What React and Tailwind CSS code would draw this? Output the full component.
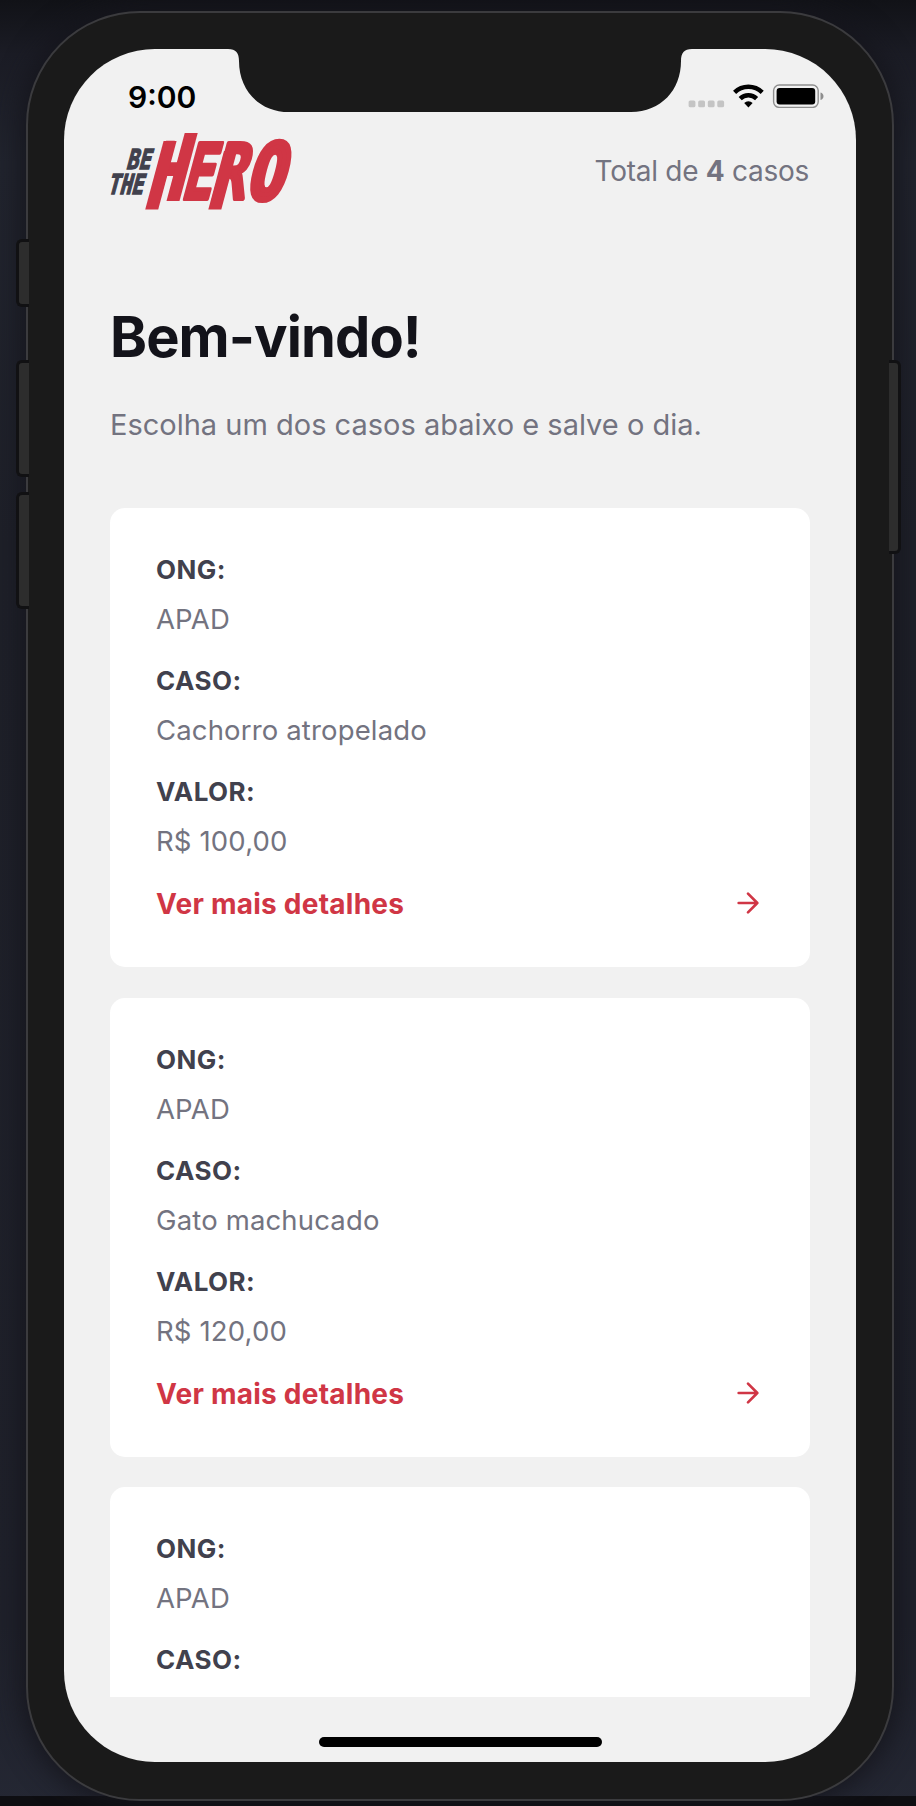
import React from "react";

const cases = [
  [["ONG:", "APAD"], ["CASO:", "Cachorro atropelado"], ["VALOR:", "R$ 100,00"]],
  [["ONG:", "APAD"], ["CASO:", "Gato machucado"], ["VALOR:", "R$ 120,00"]],
  [["ONG:", "APAD"], ["CASO:", null]],
];

function Logo() {
  return (
    <svg className="mt-[5px] h-[78px] w-[184px] overflow-visible" viewBox="109 133 184 78">
      <g transform="translate(0 201) skewX(-15)">
        <g className="fill-[#d03645] stroke-[#d03645] font-['DejaVu_Sans_Mono'] font-bold" fontSize="77" strokeWidth="4" strokeLinejoin="round">
          <text transform="translate(145.4 -2) scale(.737 1)">H</text>
          <text transform="translate(178.4 -2) scale(.67 1)">E</text>
          <text transform="translate(207.9 -2) scale(.73 1)">R</text>
          <text strokeWidth="6" transform="translate(243.4 -2) scale(.79 1)">O</text>
        </g>
        <g className="fill-[#d03645]">
          <rect x="146.5" y="-60" width="13" height="68.5" />
          <rect x="165.5" y="-68" width="13" height="68" />
          <rect x="209.6" y="-50" width="13" height="58.5" />
        </g>
      </g>
      <g className="fill-[#41414d] stroke-[#41414d] font-['DejaVu_Sans_Mono'] font-bold" strokeWidth="1.4" fontSize="27.5">
        <text transform="translate(124.8 168.6) skewX(-15) scale(.73 1)">BE</text>
        <text transform="translate(106 194.2) skewX(-15) scale(.72 1)">THE</text>
      </g>
    </svg>
  );
}

function StatusIcons() {
  return (
    <svg className="h-6 w-[137px]" viewBox="688 84 137 24">
      <g className="fill-[#c4c4c4]">
        <rect x="688.6" y="100.5" width="6.8" height="6.8" rx="1.6" />
        <rect x="698.2" y="100.5" width="6.8" height="6.8" rx="1.6" />
        <rect x="707.8" y="100.5" width="6.8" height="6.8" rx="1.6" />
        <rect x="717.3" y="100.5" width="6.8" height="6.8" rx="1.6" />
      </g>
      <g className="fill-none stroke-black" strokeWidth="4.4">
        <path d="M734.6 92.4a19.6 19.6 0 0 1 27.6 0" />
        <path d="M740.2 98.6a11.6 11.6 0 0 1 16.4 0" />
      </g>
      <path className="fill-black" d="M744.2 103a6.2 6.2 0 0 1 8.4 0l-4.2 4.4z" />
      <rect x="773.6" y="85" width="44.6" height="22.4" rx="5.6" className="fill-none stroke-[#8e8e8e]" strokeWidth="1.4" />
      <rect x="776.6" y="88" width="38.6" height="16.6" rx="3" className="fill-black" />
      <path className="fill-[#8e8e8e]" d="M820.5 92.5c4 1.2 4 6.4 0 7.6z" />
    </svg>
  );
}

function Case({ fields }) {
  return (
    <article className="flex h-[459px] shrink-0 flex-col rounded-[15px] bg-white px-[46px] pt-[44px] text-[27.5px] text-[#737380]">
      <dl>
        {fields.map(([label, value]) => (
          <React.Fragment key={label}>
            <dt className="h-[49px] text-[26px] leading-[36px] font-bold tracking-[0.45px] text-[#41414d]">{label}</dt>
            {value && <dd className="h-[62px] leading-[36px] tracking-[0.15px]">{value}</dd>}
          </React.Fragment>
        ))}
      </dl>
      {fields.length === 3 && (
        <div className="mt-px flex items-center justify-between text-[28px] leading-[36px] font-bold tracking-[0.25px] text-[#d03645]">
          <span>Ver mais detalhes</span>
          <svg className="-mt-0.5 h-8 w-8 fill-none stroke-current" viewBox="0 0 24 24" strokeWidth="2" strokeLinecap="round" strokeLinejoin="round">
            <path d="M5 12h14M12 5l7 7-7 7" />
          </svg>
        </div>
      )}
    </article>
  );
}

export default function App() {
  return (
    <div className="relative h-[1806px] w-[916px] overflow-hidden bg-[linear-gradient(#111217,#1b1c25_3%,#21242e_9%,#1e2029_30%,#1f212b_90%,#242733)] font-['Inter','Liberation_Sans',sans-serif]">
      <div className="absolute inset-x-0 bottom-0 h-2.5 bg-[#0e0e12]" />
      <div className="relative mt-[11px] ml-[26px] h-[1790px] w-[868px] rounded-[114px] border-2 border-[#3b3b3e] bg-[#1a1a1a] px-9 pt-9 shadow-[0_0_28px_4px_#15151c]">
        <main className="flex h-[1713px] w-[792px] flex-col overflow-hidden rounded-[91px] bg-[#f1f1f1]">
          <div className="flex h-[79px] shrink-0 items-start">
            <div className="w-[175px] pt-[30px] pl-[64px] text-[30px] leading-[36px] font-semibold text-black">9:00</div>
            <svg className="-mt-px h-[65px] w-[442px] overflow-visible" viewBox="0 0 442 65">
              <path className="fill-[#1a1a1a]" d="M-11 0V1C-3 1 0 5 0 13C0 42 20 64 50 64H392C422 64 442 42 442 13C442 5 445 1 453 1V0z" />
            </svg>
            <div className="pt-[35px] pl-[7px]"><StatusIcons /></div>
          </div>
          <div className="flex min-h-0 flex-1 flex-col px-[46px]">
            <header className="flex h-[179px] shrink-0 items-start justify-between">
              <Logo />
              <p className="mt-[25px] mr-[1px] text-[28px] leading-[36px] tracking-[-0.28px] text-[#737380]">Total de <b>4</b> casos</p>
            </header>
            <h1 className="h-[100px] shrink-0 text-[56px] leading-[60px] font-bold tracking-[-0.9px] text-[#13131a]">Bem-vindo!</h1>
            <p className="h-[101px] shrink-0 text-[29px] leading-[36px] text-[#737380]">Escolha um dos casos abaixo e salve o dia.</p>
            <section className="flex h-[1189px] shrink-0 flex-col gap-[30.5px] overflow-hidden">
              {cases.map((fields, i) => <Case key={i} fields={fields} />)}
            </section>
          </div>
          <div className="mb-[15px] h-[10px] w-[283px] shrink-0 self-center rounded-full bg-black" />
        </main>
      </div>
      <div className="absolute top-[239px] left-[16px] h-[68px] w-[13px] rounded-l-[6px] border-[3px] border-r-0 border-[#111113] bg-[#2d2d2d]" />
      <div className="absolute top-[360px] left-[16px] h-[117px] w-[13px] rounded-l-[6px] border-[3px] border-r-0 border-[#111113] bg-[#2d2d2d]" />
      <div className="absolute top-[492px] left-[16px] h-[117px] w-[13px] rounded-l-[6px] border-[3px] border-r-0 border-[#111113] bg-[#2d2d2d]" />
      <div className="absolute top-[360px] left-[889px] h-[194px] w-[12px] rounded-r-[6px] border-[3px] border-l-0 border-[#111113] bg-[#2d2d2d]" />
    </div>
  );
}
